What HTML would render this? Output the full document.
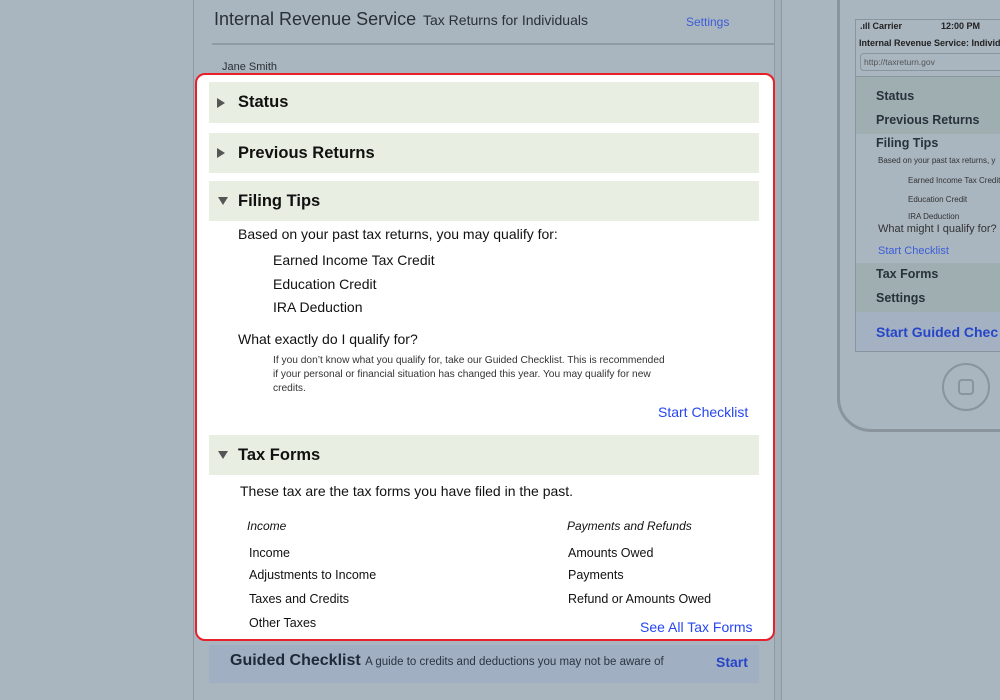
<!DOCTYPE html>
<html><head><style>
*{margin:0;padding:0;box-sizing:border-box}
body{width:1000px;height:700px;background:#a9b5bf;position:relative;overflow:hidden;font-family:"Liberation Sans",sans-serif;color:#111}
.a{position:absolute;white-space:nowrap}
.hd{position:absolute;left:209px;width:550px;background:#e9eee2}
.hd span{position:absolute;left:29px;font-weight:bold;font-size:16.5px}
.tri{position:absolute;left:8px;width:0;height:0}
.r{border-top:5px solid transparent;border-bottom:5px solid transparent;border-left:8px solid #555}
.d{border-left:5px solid transparent;border-right:5px solid transparent;border-top:8px solid #555}
.blue{color:#2646f0}
.ph{position:absolute;font-weight:bold;color:#28323a;font-size:12.5px}
</style></head><body>
<div class="a" style="left:193px;top:0;width:1px;height:700px;background:#8d99a3"></div>
<div class="a" style="left:774px;top:0;width:8px;height:700px;background:#a3afb9;border-left:1px solid #8d99a3;border-right:1px solid #8d99a3"></div>
<div class="a" style="left:214px;top:9px;font-size:18px;color:#2a3036">Internal Revenue Service</div>
<div class="a" style="left:423px;top:12px;font-size:14px;color:#2a3036">Tax Returns for Individuals</div>
<div class="a" style="left:686px;top:15px;font-size:12px;color:#3d5ed8">Settings</div>
<div class="a" style="left:212px;top:43px;width:562px;height:2px;background:#8e9aa4"></div>
<div class="a" style="left:222px;top:61px;font-size:11px;color:#2a3036">Jane Smith</div>
<div class="a" style="left:209px;top:645px;width:550px;height:38px;background:#a0afc1"></div>
<div class="a" style="left:230px;top:652px;font-size:16px;font-weight:bold;color:#1f2a38">Guided Checklist <span style="font-size:11.5px;font-weight:normal;color:#2a3542">A guide to credits and deductions you may not be aware of</span></div>
<div class="a" style="left:716px;top:654px;font-size:14px;font-weight:bold;color:#2646c8">Start</div>

<div class="a" style="left:195px;top:73px;width:580px;height:568px;background:#fff;border:2px solid #e8202a;border-radius:10px"></div>
<div class="hd" style="top:82px;height:41px"><i class="tri r" style="top:16px"></i><span style="top:11px">Status</span></div>
<div class="hd" style="top:133px;height:40px"><i class="tri r" style="top:15px"></i><span style="top:11px">Previous Returns</span></div>
<div class="hd" style="top:181px;height:40px"><i class="tri d" style="top:16px;left:9px"></i><span style="top:11px">Filing Tips</span></div>
<div class="a" style="left:238px;top:226px;font-size:14px">Based on your past tax returns, you may qualify for:</div>
<div class="a" style="left:273px;top:252px;font-size:14px">Earned Income Tax Credit</div>
<div class="a" style="left:273px;top:276px;font-size:14px">Education Credit</div>
<div class="a" style="left:273px;top:299px;font-size:14px">IRA Deduction</div>
<div class="a" style="left:238px;top:331px;font-size:14px">What exactly do I qualify for?</div>
<div class="a" style="left:273px;top:354px;font-size:10.2px;line-height:14px;color:#333">If you don’t know what you qualify for, take our Guided Checklist. This is recommended<br>if your personal or financial situation has changed this year. You may qualify for new<br>credits.</div>
<div class="a blue" style="left:658px;top:404px;font-size:14px">Start Checklist</div>
<div class="hd" style="top:435px;height:40px"><i class="tri d" style="top:16px;left:9px"></i><span style="top:11px">Tax Forms</span></div>
<div class="a" style="left:240px;top:483px;font-size:14px">These tax are the tax forms you have filed in the past.</div>
<div class="a" style="left:247px;top:519px;font-size:12px;font-style:italic">Income</div>
<div class="a" style="left:567px;top:519px;font-size:12px;font-style:italic">Payments and Refunds</div>
<div class="a" style="left:249px;top:546px;font-size:12.5px">Income</div>
<div class="a" style="left:249px;top:568px;font-size:12.5px">Adjustments to Income</div>
<div class="a" style="left:249px;top:592px;font-size:12.5px">Taxes and Credits</div>
<div class="a" style="left:249px;top:616px;font-size:12.5px">Other Taxes</div>
<div class="a" style="left:568px;top:546px;font-size:12.5px">Amounts Owed</div>
<div class="a" style="left:568px;top:568px;font-size:12.5px">Payments</div>
<div class="a" style="left:568px;top:592px;font-size:12.5px">Refund or Amounts Owed</div>
<div class="a blue" style="left:640px;top:619px;font-size:14px">See All Tax Forms</div>

<div class="a" style="left:837px;top:-40px;width:220px;height:472px;border:3px solid #8a949c;border-radius:34px"></div>
<div class="a" style="left:855px;top:19px;width:150px;height:333px;border:1px solid #8a949c;background:#a9b5bf;overflow:hidden">
 <div class="a" style="left:4px;top:1px;font-size:9px;font-weight:bold;color:#222">.ıll Carrier</div>
 <div class="a" style="left:85px;top:1px;font-size:9px;font-weight:bold;color:#222">12:00 PM</div>
 <div class="a" style="left:3px;top:18px;font-size:9px;font-weight:bold;color:#222">Internal Revenue Service: Individu</div>
 <div class="a" style="left:4px;top:33px;width:150px;height:18px;border:1px solid #8a949c;border-radius:4px;font-size:8.5px;color:#555;padding:3px 3px">http://taxreturn.gov</div>
 <div class="a" style="left:0;top:56px;width:150px;height:1px;background:#8a949c"></div>
 <div class="a" style="left:0;top:57px;width:150px;height:57px;background:#9eaeb1"></div>
 <div class="a" style="left:0;top:243px;width:150px;height:49px;background:#9eaeb1"></div>
 <div class="a" style="left:0;top:292px;width:150px;height:41px;background:#a3b1c2"></div>
 <div class="ph" style="left:20px;top:69px">Status</div>
 <div class="ph" style="left:20px;top:93px">Previous Returns</div>
 <div class="ph" style="left:20px;top:116px">Filing Tips</div>
 <div class="a" style="left:22px;top:136px;font-size:8px;color:#333">Based on your past tax returns, y</div>
 <div class="a" style="left:52px;top:156px;font-size:8px;color:#333">Earned Income Tax Credit</div>
 <div class="a" style="left:52px;top:175px;font-size:8px;color:#333">Education Credit</div>
 <div class="a" style="left:52px;top:192px;font-size:8px;color:#333">IRA Deduction</div>
 <div class="a" style="left:22px;top:203px;font-size:11px;color:#333">What might I qualify for?</div>
 <div class="a" style="left:22px;top:225px;font-size:11px;color:#3d5ed8">Start Checklist</div>
 <div class="ph" style="left:20px;top:247px">Tax Forms</div>
 <div class="ph" style="left:20px;top:271px">Settings</div>
 <div class="a" style="left:20px;top:304px;font-size:14px;font-weight:bold;color:#2646c8">Start Guided Chec</div>
</div>
<div class="a" style="left:942px;top:363px;width:48px;height:48px;border:2px solid #8a949c;border-radius:50%"></div>
<div class="a" style="left:958px;top:379px;width:16px;height:16px;border:2px solid #8a949c;border-radius:4px"></div>
</body></html>
